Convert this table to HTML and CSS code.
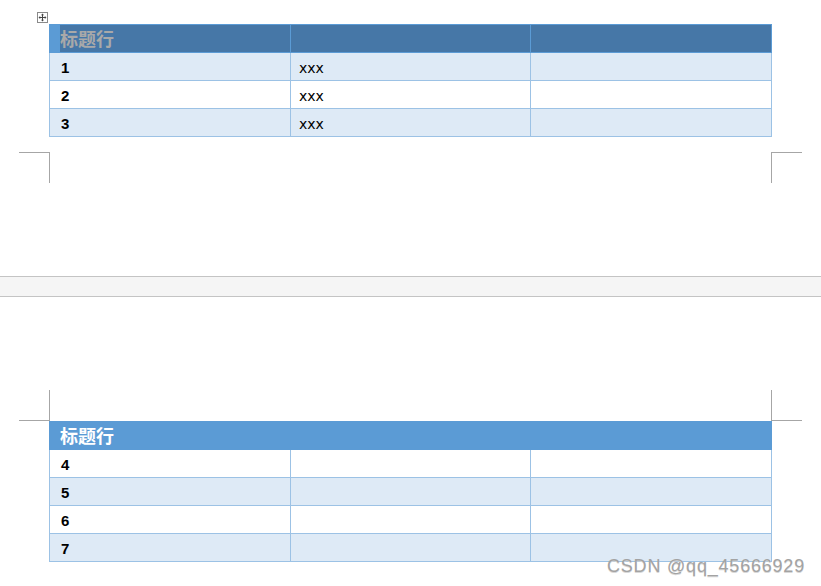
FILE: index.html
```html
<!DOCTYPE html>
<html lang="zh-CN">
<head>
<meta charset="utf-8">
<title>表格标题行</title>
<link rel="stylesheet" href="styles.css">
</head>
<body>
<div class="doc">
  <section class="page page-top">
    <div class="table-area">
      <span class="move-handle">
        <svg width="11" height="11" viewBox="0 0 11 11">
          <rect x="0.5" y="0.5" width="10" height="10" fill="#fff" stroke="#8a8a8a"/>
          <path d="M5.5 2.5V8.5M2.5 5.5H8.5" stroke="#444" stroke-width="1" fill="none"/>
          <path d="M5.5 1.5L4 3.2H7Z M5.5 9.5L4 7.8H7Z M1.5 5.5L3.2 4V7Z M9.5 5.5L7.8 4V7Z" fill="#444"/>
        </svg>
      </span>
      <div class="grid">
        <div class="cell hdr sel c1 pad-l">标题行</div>
        <div class="cell hdr sel"></div>
        <div class="cell hdr sel"></div>

        <div class="cell band c1 num">1</div>
        <div class="cell band txt">xxx</div>
        <div class="cell band"></div>

        <div class="cell c1 num">2</div>
        <div class="cell txt">xxx</div>
        <div class="cell"></div>

        <div class="cell band c1 num">3</div>
        <div class="cell band txt">xxx</div>
        <div class="cell band"></div>
      </div>
    </div>
    <div class="marks marks-bottom">
      <span class="mark mark-l"></span>
      <span class="mark mark-r"></span>
    </div>
  </section>

  <div class="page-gap"></div>

  <section class="page page-bottom">
    <div class="marks marks-top">
      <span class="mark mark-l"></span>
      <span class="mark mark-r"></span>
    </div>
    <div class="grid">
      <div class="cell hdr hdr-full">标题行</div>

      <div class="cell c1 num">4</div>
      <div class="cell"></div>
      <div class="cell"></div>

      <div class="cell band c1 num">5</div>
      <div class="cell band"></div>
      <div class="cell band"></div>

      <div class="cell c1 num">6</div>
      <div class="cell"></div>
      <div class="cell"></div>

      <div class="cell band c1 num">7</div>
      <div class="cell band"></div>
      <div class="cell band"></div>
    </div>
  </section>

  <div class="watermark">CSDN @qq_45666929</div>
</div>
</body>
</html>
```

FILE: styles.css
```css
html, body {
  margin: 0;
  padding: 0;
  background: #ffffff;
}

.doc {
  position: relative;
  width: 821px;
  height: 586px;
  overflow: hidden;
  font-family: "DejaVu Sans", "Noto Sans CJK SC", sans-serif;
  color: #000;
}

.page-top {
  box-sizing: border-box;
  height: 276px;
  padding-top: 24px;
}

.table-area {
  position: relative;
}

.move-handle {
  position: absolute;
  left: 37px;
  top: -12px;
  width: 11px;
  height: 11px;
  display: block;
  line-height: 0;
}

.grid {
  display: grid;
  grid-template-columns: 242px 240px 241px;
  width: 723px;
  margin-left: 49px;
}

.cell {
  box-sizing: border-box;
  height: 28px;
  border-right: 1px solid #9cc2e5;
  border-bottom: 1px solid #9cc2e5;
  display: flex;
  align-items: center;
  padding: 2px 0 0 10px;
  background: #ffffff;
}

.c1 {
  border-left: 1px solid #9cc2e5;
}

.band {
  background: #deeaf6;
}

.num {
  font-family: "Liberation Sans", "DejaVu Sans", sans-serif;
  font-weight: 700;
  font-size: 15px;
  padding-left: 11px;
}

.txt {
  font-size: 14px;
  padding-left: 8px;
}

.hdr {
  height: 29px;
  border-top: 1px solid #5b9bd5;
  border-right-color: #5b9bd5;
  border-bottom-color: #5b9bd5;
  border-left-color: #5b9bd5;
  background: #5b9bd5;
  color: #ffffff;
  font-family: "Noto Sans CJK SC", sans-serif;
  font-weight: 700;
  font-size: 18px;
  padding-left: 10px;
  padding-top: 0;
  padding-bottom: 2px;
}

.sel {
  background: #4677a7;
  color: #a9a9a9;
}

.sel.pad-l {
  box-shadow: inset 10px 0 0 #5b9bd5;
}

.hdr-full {
  grid-column: 1 / -1;
  border-left: 1px solid #5b9bd5;
}

.marks {
  display: flex;
  justify-content: space-between;
  padding: 0 19px;
}

.marks-bottom {
  margin-top: 15px;
}

.page-bottom {
  padding-top: 93px;
}

.mark {
  box-sizing: border-box;
  width: 31px;
  height: 31px;
  display: block;
}

.marks-bottom .mark-l {
  border-top: 1px solid #a6a6a6;
  border-right: 1px solid #a6a6a6;
}

.marks-bottom .mark-r {
  border-top: 1px solid #a6a6a6;
  border-left: 1px solid #a6a6a6;
}

.marks-top .mark-l {
  border-bottom: 1px solid #a6a6a6;
  border-right: 1px solid #a6a6a6;
}

.marks-top .mark-r {
  border-bottom: 1px solid #a6a6a6;
  border-left: 1px solid #a6a6a6;
}

.page-gap {
  box-sizing: border-box;
  height: 21px;
  background: #f5f5f5;
  border-top: 1px solid #c4c4c4;
  border-bottom: 1px solid #c4c4c4;
}

.watermark {
  position: absolute;
  left: 607px;
  top: 557px;
  font-family: "Liberation Sans", Arial, sans-serif;
  font-size: 18px;
  line-height: 1;
  letter-spacing: 0.8px;
  color: #a3a3a3;
  text-shadow: 0 1px 0 #d8d8d8;
  white-space: nowrap;
}
```
